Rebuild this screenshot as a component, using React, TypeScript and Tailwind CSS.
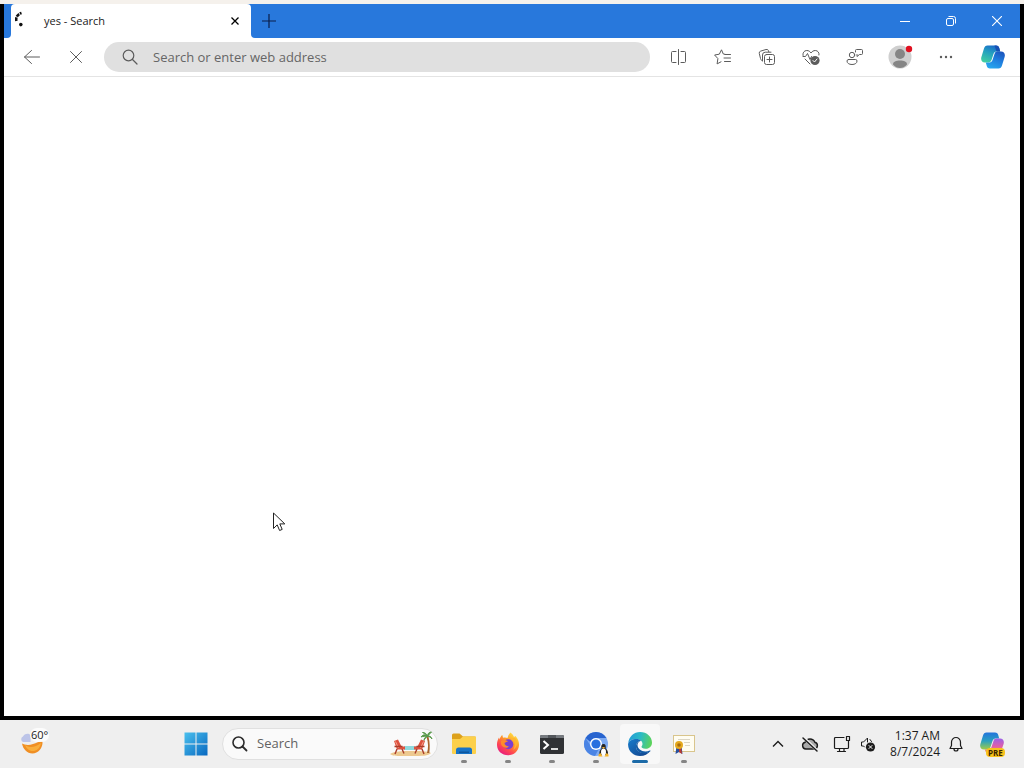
import { ReactNode, useState } from "react";

type ButtonProps = {
  label: string;
  className?: string;
  children: ReactNode;
};

function IconButton({ label, className = "w-11", children }: ButtonProps) {
  return (
    <button
      aria-label={label}
      className={`h-full shrink-0 flex items-center justify-center ${className}`}
    >
      {children}
    </button>
  );
}

function LineIcon({ children, size = 20 }: { children: ReactNode; size?: number }) {
  return (
    <svg
      width={size}
      height={size}
      viewBox={`0 0 ${size} ${size}`}
      fill="none"
      stroke="currentColor"
      strokeLinecap="round"
      strokeLinejoin="round"
    >
      {children}
    </svg>
  );
}

function TitleBar() {
  return (
    <div className="h-[34px] flex bg-[#2878dc]">
      <div className="w-[7px] shrink-0 bg-white">
        <div className="h-full rounded-br bg-[#2878dc]" />
      </div>
      <div className="bg-[#2878dc]">
        <div className="w-60 h-full flex items-center rounded-t bg-white pl-1 pr-2">
          <svg width="16" height="16" viewBox="0 0 16 16" className="shrink-0 mb-1">
            <path
              d="M1.4 10C.5 6.500 2.400 3.300 6.500 2"
              fill="none"
              stroke="#111"
              strokeWidth="2.600"
              strokeDasharray="3.600 .8"
            />
            <circle cx="5.800" cy="13.600" r="1.800" fill="#111" />
          </svg>
          <span className="ml-[13px] flex-1 text-[11px] text-[#1a1a1a]">
            yes - Search
          </span>
          <button aria-label="Close tab" className="p-1 text-black">
            <svg width="8" height="8" viewBox="0 0 8 8" stroke="currentColor" strokeWidth="1.300">
              <path d="M.5.5l7 7M7.500.5l-7 7" />
            </svg>
          </button>
        </div>
      </div>
      <div className="shrink-0 bg-white">
        <button
          aria-label="New tab"
          className="w-9 h-full flex items-center justify-center rounded-bl bg-[#2878dc] text-[#0b1f4a]"
        >
          <svg width="14" height="14" viewBox="0 0 14 14" stroke="currentColor" strokeWidth="1.200">
            <path d="M7 0v14M0 7h14" />
          </svg>
        </button>
      </div>
      <div className="ml-auto flex text-white">
        <IconButton label="Minimize" className="w-[46px]">
          <svg width="10" height="10" viewBox="0 0 10 10" stroke="currentColor">
            <path d="M0 5.500h10" />
          </svg>
        </IconButton>
        <IconButton label="Restore" className="w-[46px]">
          <svg width="10" height="10" viewBox="0 0 10 10" fill="none" stroke="currentColor">
            <rect x=".5" y="2.500" width="7" height="7" rx="1.500" />
            <path d="M2.500.5h5a2 2 0 0 1 2 2v5" />
          </svg>
        </IconButton>
        <IconButton label="Close" className="w-[46px]">
          <svg width="10" height="10" viewBox="0 0 10 10" stroke="currentColor" strokeWidth="1.100">
            <path d="M0 0l10 10M10 0L0 10" />
          </svg>
        </IconButton>
      </div>
    </div>
  );
}

function CopilotLogo() {
  return (
    <svg width="24" height="24" viewBox="0 0 24 24">
      <defs>
        <linearGradient id="copilotLeft" x1=".6" y1="0" x2=".2" y2="1">
          <stop offset="0" stopColor="#1a6cc9" />
          <stop offset=".4" stopColor="#239fc0" />
          <stop offset="1" stopColor="#42d0a0" />
        </linearGradient>
        <linearGradient id="copilotRight" x1=".8" y1="0" x2=".3" y2="1">
          <stop offset="0" stopColor="#1c55bd" />
          <stop offset=".5" stopColor="#1f7fdf" />
          <stop offset="1" stopColor="#26a6ee" />
        </linearGradient>
      </defs>
      <path
        d="M6.500.5H15c2 0 2.800 1 3.300 2.700L19.200 6.500h-3.700c-1.600 0-2.500.9-3 2.400l-2 6.200c-.6 1.700-1.500 2.400-3 2.400H4C1 17.500-.5 15 .4 12L3 3.500C3.600 1.500 4.600.5 6.500.5z"
        fill="url(#copilotLeft)"
      />
      <path d="M13.500.5H15c2 0 2.800 1 3.300 2.700l.9 3.300h-3.700z" fill="#1750b4" />
      <path
        d="M17.500 23.500H9c-2 0-2.800-1-3.300-2.700L4.800 17.500h3.700c1.600 0 2.500-.9 3-2.400l2-6.200c.6-1.700 1.500-2.400 3-2.400H20c3 0 4.500 2.500 3.600 5.500L21 20.500c-.6 2-1.600 3-3.500 3z"
        fill="url(#copilotRight)"
      />
    </svg>
  );
}

function Toolbar() {
  const [address, setAddress] = useState("");

  return (
    <div className="h-[39px] flex items-center border-b border-[#e4e4e4] bg-white pl-1.5 pr-[3px] text-[#5c5c5c]">
      <IconButton label="Back">
        <LineIcon size={16}>
          <path d="M15.500 8H.500M7.500 1.500L.5 8l7 6.500" />
        </LineIcon>
      </IconButton>
      <IconButton label="Stop">
        <LineIcon size={12}>
          <path d="M.5.5l11 11M11.500.5l-11 11" />
        </LineIcon>
      </IconButton>
      <div className="ml-1.5 mr-[7px] flex-1 min-w-0 h-[30px] flex items-center rounded-full bg-[#e0e0e0] pl-4">
        <LineIcon>
          <circle cx="8.500" cy="8.500" r="5.300" strokeWidth="1.200" />
          <path d="M12.500 12.500l4.500 4.500" strokeWidth="1.200" />
        </LineIcon>
        <input
          type="text"
          aria-label="Address bar"
          placeholder="Search or enter web address"
          value={address}
          onChange={(e) => setAddress(e.target.value)}
          className="ml-[13px] mt-px flex-1 min-w-0 bg-transparent outline-none text-[13px] text-[#333] placeholder:text-[#666]"
        />
      </div>
      <IconButton label="Split screen">
        <LineIcon>
          <path d="M9.500 2.500v15M7 4.500H3.500a1 1 0 0 0-1 1v9a1 1 0 0 0 1 1H7M12 4.500h3.500a1 1 0 0 1 1 1v9a1 1 0 0 1-1 1H12" />
        </LineIcon>
      </IconButton>
      <IconButton label="Favorites">
        <LineIcon>
          <path d="M12 7.300L10.300 7 8.500 2.800 6.300 7.200 1.600 8l3.300 3.600-.8 5.300L8 14.800M12 7.500h5.500M11 11h6.500M11.500 14.500h6" />
        </LineIcon>
      </IconButton>
      <IconButton label="Collections">
        <LineIcon>
          <rect x="7.500" y="7.500" width="10" height="10" rx="2" />
          <path d="M12.500 10v5M10 12.500h5M5 13.500c-1-.3-1.300-1-1.500-2L2.300 6.500a2 2 0 0 1 1.400-2.400L9 2.500a2 2 0 0 1 2.500 1.300l.3 1M5.500 14V8A2.800 2.800 0 0 1 8.300 5.200H14" />
        </LineIcon>
      </IconButton>
      <IconButton label="Browser essentials">
        <LineIcon>
          <path d="M2 8.500c-.6-2.500 1-5 3.800-5 1.900 0 3.200 1 4.200 2.500 1-1.500 2.500-2.500 4.300-2.500 2.700 0 4.200 2.500 3.700 4.500M2 9.500h2.500l2-3 2.500 6 1.500-3M4 12l5 5" />
          <circle cx="14" cy="13.500" r="4.600" fill="currentColor" stroke="none" />
          <path d="M12 13.500l1.500 1.500 2.500-3" stroke="#fff" />
        </LineIcon>
      </IconButton>
      <IconButton label="Feedback">
        <LineIcon>
          <circle cx="7" cy="8" r="2.700" />
          <path d="M3.500 12.500h7a1.500 1.500 0 0 1 1.500 1.500c0 2.200-2 3.500-5 3.500s-5-1.300-5-3.500a1.500 1.500 0 0 1 1.500-1.500zM10.500 5V3.500a1 1 0 0 1 1-1h5a1 1 0 0 1 1 1v3a1 1 0 0 1-1 1h-2L12 9.500v-2" />
        </LineIcon>
      </IconButton>
      <IconButton label="Profile" className="w-[46px]">
        <svg width="26" height="24" viewBox="0 0 26 24">
          <circle cx="13" cy="12" r="11.500" fill="#cfcfcf" />
          <circle cx="13" cy="9" r="5" fill="#858585" />
          <path d="M6 19.500c0-3 3-4 7-4s7 1 7 4c-2 2.500-4.500 3.500-7 3.500s-5-1-7-3.500z" fill="#858585" />
          <circle cx="22" cy="4" r="3.200" fill="#e01020" />
        </svg>
      </IconButton>
      <IconButton label="Settings and more" className="w-[46px]">
        <svg width="14" height="4" viewBox="0 0 14 4" fill="currentColor">
          <circle cx="2" cy="2" r="1.200" />
          <circle cx="7" cy="2" r="1.200" />
          <circle cx="12" cy="2" r="1.200" />
        </svg>
      </IconButton>
      <IconButton label="Copilot" className="w-12">
        <CopilotLogo />
      </IconButton>
    </div>
  );
}

function FolderIcon() {
  return (
    <svg width="24" height="24" viewBox="0 0 24 24">
      <path d="M0 3a1.500 1.500 0 0 1 1.500-1.500h6L11 4.500h11.500A1.500 1.500 0 0 1 24 6v4H0z" fill="#dda11b" />
      <path d="M0 7h8l3-2.500h13V21a1 1 0 0 1-1 1H1a1 1 0 0 1-1-1z" fill="#fcd04b" />
      <path d="M4 22v-4a2.500 2.500 0 0 1 2.500-2.500h11A2.500 2.500 0 0 1 20 18v4z" fill="#1873c6" />
      <path d="M7 19.500h10V21H7z" fill="#0d569e" />
    </svg>
  );
}

function FirefoxIcon() {
  return (
    <svg width="24" height="24" viewBox="0 0 24 24">
      <defs>
        <linearGradient id="fox" x1=".85" y1="0" x2=".2" y2="1">
          <stop offset="0" stopColor="#fff04a" />
          <stop offset=".4" stopColor="#ff9a28" />
          <stop offset=".7" stopColor="#ff4652" />
          <stop offset="1" stopColor="#e31587" />
        </linearGradient>
      </defs>
      <path
        d="M14.500.5c2 1.500 3 3 3.500 4.500l1.500-1c2.500 3 3.800 6 3.500 9.500C22.500 19 18 23.300 12 23.300S1.200 19 1 13c-.1-3 .8-5.500 2-7.500l.7 2C4 5.500 5 4 6.300 3l.7 2.700c2-.4 3.500-.2 4.500.3.500-2 1.500-4 3-5.500z"
        fill="url(#fox)"
      />
      <circle cx="12.300" cy="12.300" r="5" fill="#7a3fd0" />
      <path d="M5 9c2.500-1.500 5-1.200 7 .5-1.500 0-2 1-3.500 1.500 0 2 2 3.500 4.300 3.300C11 17 6.500 16 5 12z" fill="#ff8a2c" />
      <path d="M16 6c3 3 4 8 1 12 5-3 5-9 2-12z" fill="#ffb52f" />
    </svg>
  );
}

function TerminalIcon() {
  return (
    <svg width="24" height="20" viewBox="0 0 24 20">
      <rect y="1" width="24" height="19" rx="1.500" fill="#303235" />
      <path d="M0 4V2.500A1.500 1.500 0 0 1 1.500 1h21A1.500 1.500 0 0 1 24 2.500V4z" fill="#777b80" />
      <path d="M8 1h8v3H8z" fill="#53575c" />
      <path d="M3.500 7l4.500 4-4.500 4" fill="none" stroke="#fff" strokeWidth="2" />
      <path d="M11 15h7" stroke="#ddd" strokeWidth="2" />
    </svg>
  );
}

function ChromiumIcon() {
  return (
    <svg width="26" height="26" viewBox="0 0 26 26">
      <circle cx="13" cy="13" r="12" fill="#7daaf2" />
      <path d="M2.600 7A12 12 0 0 1 23.400 7H13a6 6 0 0 0-5.500 4z" fill="#2864cf" />
      <path d="M2.600 7A12 12 0 0 0 12 25l4-7.200a6 6 0 0 1-8.500-3z" fill="#4a84e4" />
      <circle cx="13" cy="13" r="6" fill="#fff" />
      <circle cx="13" cy="13" r="4.600" fill="#2870df" />
      <path d="M20.500 13c-2 0-2.500 2-2 4.500-1.800 2-2.700 4-1.700 6.500h7.600c1.500-2.500 0-5-1.700-6.500.3-2.500 0-4.500-2.200-4.500z" fill="#262626" />
      <ellipse cx="20.500" cy="21" rx="2.500" ry="3.500" fill="#fff" />
      <path d="M19 16h3l-1.500 2z" fill="#f5b12c" />
      <path d="M15.500 23.500l2-1.500 2 3.500h-4zM25.500 23.500l-2-1.500-2 3.500h4z" fill="#f3b229" />
    </svg>
  );
}

function EdgeIcon() {
  return (
    <svg width="24" height="24" viewBox="0 0 24 24">
      <defs>
        <linearGradient id="edgeTop" x1="0" y1=".3" x2="1" y2=".5">
          <stop offset="0" stopColor="#249bd8" />
          <stop offset=".5" stopColor="#2bbbc4" />
          <stop offset="1" stopColor="#5cd35a" />
        </linearGradient>
        <linearGradient id="edgeBottom" x1="0" y1="0" x2="1" y2="1">
          <stop offset="0" stopColor="#177ccc" />
          <stop offset="1" stopColor="#123f87" />
        </linearGradient>
      </defs>
      <path
        d="M.2 11C1 4.500 6 0 12 0c7 0 12 5 12 10.500 0 4-3 6.300-6.500 6.300-3 0-4-1.200-4-2 0-.7 1-1.200 1-2.800 0-2.600-2.500-5-6-5C4.500 7 1.500 8.500.2 11z"
        fill="url(#edgeTop)"
      />
      <path
        d="M.1 12C.5 9 4 7 8.500 7c2 0 3.500.7 4.500 1.700-3 0-5 3-5 5.800 0 4 3.500 6.500 8 6.500 2.500 0 4.500-.8 6.300-2C20 22 16.500 24 12 24 5.500 24-.3 18.800.1 12z"
        fill="url(#edgeBottom)"
      />
      <path
        d="M13 8.700c-3 0-5 3-5 5.800 0 4 3.500 6.800 8 6.800 2.500 0 4.500-.8 6.300-2.100.5-.4 0-1-.6-.7-1.200.6-2.700.9-4.200.9-4.500 0-8-3-8-6.500 0-1.800 1.200-3.400 3.500-4.200z"
        fill="#135ba5"
      />
    </svg>
  );
}

function CertificateIcon() {
  return (
    <svg width="24" height="22" viewBox="0 0 24 22">
      <rect x="1.500" y="2.500" width="21" height="16" fill="#fffdf2" stroke="#d9c58c" />
      <path d="M6 6.500h12M12 9.500h6M13 12.500h5" stroke="#dcd6c4" />
      <path d="M4.500 13L3.500 21l3.500-2 3.500 2-1-8z" fill="#274e9c" />
      <path d="M7 14v5l3 2-1-7z" fill="#c0392b" />
      <circle cx="7" cy="12" r="4" fill="#e5a91e" />
      <circle cx="7" cy="12" r="1.800" fill="#a86d10" />
    </svg>
  );
}

function BeachArt() {
  return (
    <svg width="44" height="26" viewBox="0 0 44 26">
      <path d="M1 23c5-3 12-3 20-3s17 0 21 2c-3 3-8 3-20 3S4 25.500 1 23z" fill="#edc98f" />
      <path d="M15 15h13v4H15z" fill="#8fd9dc" />
      <path d="M38 22c1.500-5 1.500-10-.5-16l2-.3c1.500 6 1.500 11 .8 16.300z" fill="#a8642d" />
      <path
        d="M38.500 5.500c-2.500-2.500-4.500-2-6.500.5 2.500-.8 4-.8 6.500-.5zM38.500 5.500c-1-3-2.500-4-5-4 2.500 1 3.500 2 5 4zM38.500 5.500c0-3 1.500-4.500 4-4.500-1.500 1.500-2.500 2.500-4 4.500zM38.500 5.500c2.500-1 3.500 0 4.500 2.500-1.500-2-2.500-2.500-4.500-2.500zM38.500 5.500c-2.200 0-3.500 1.700-3.500 4 .8-2 1.800-3 3.500-4z"
        fill="#58994b"
        stroke="#58994b"
      />
      <path d="M5 10l4-1.500 3.500 7H16v3H8z" fill="#dd5340" />
      <path d="M36 10l-4-1.500-3.500 7H25v3h8z" fill="#dd5340" />
      <path d="M6.500 10.500l3 6.500M34.500 10.500l-3 6.500" stroke="#f7a08d" />
      <path d="M8 18l-2 5M13 18l2 4.500M28 18l-2 4.500M33 18l2 5M5.500 15.500h8M27.500 15.500h8" stroke="#a93c2b" strokeWidth="1.400" />
    </svg>
  );
}

const apps = [
  { name: "File Explorer", icon: <FolderIcon />, active: false },
  { name: "Firefox", icon: <FirefoxIcon />, active: false },
  { name: "Terminal", icon: <TerminalIcon />, active: false },
  { name: "Chromium", icon: <ChromiumIcon />, active: false },
  { name: "Microsoft Edge", icon: <EdgeIcon />, active: true },
  { name: "Certificates", icon: <CertificateIcon />, active: false },
];

function Tray() {
  return (
    <div className="ml-auto h-full flex items-center pr-3 text-[#1c1c1c]">
      <IconButton label="Show hidden icons" className="w-8">
        <svg width="12" height="8" viewBox="0 0 12 8" fill="none" stroke="currentColor" strokeWidth="1.400">
          <path d="M1 6.500l5-5 5 5" />
        </svg>
      </IconButton>
      <IconButton label="OneDrive" className="w-8">
        <LineIcon size={18}>
          <path
            d="M4.800 14a3.400 3.400 0 0 1-.6-6.700C5 5.200 6.800 4 9 4s4 1.200 4.800 3.300a3.400 3.400 0 0 1-.6 6.700z"
            fill="#aaa"
            strokeWidth="1.400"
          />
          <path d="M2.500 2.500l13.500 13" stroke="#efefef" strokeWidth="3" />
          <path d="M2 3l14 13" strokeWidth="1.500" />
        </LineIcon>
      </IconButton>
      <IconButton label="Network" className="w-8">
        <LineIcon size={18}>
          <path d="M11 2.500H2.500a1 1 0 0 0-1 1v9a1 1 0 0 0 1 1h12a1 1 0 0 0 1-1V8M6.500 13.500v3M11 13.500v3M4.500 16.500h8M13.500 1.500h3v4h-3zM15.500 5.500V9" strokeWidth="1.200" />
        </LineIcon>
      </IconButton>
      <IconButton label="Volume" className="w-5">
        <LineIcon size={18}>
          <path d="M5.500 12L4.500 11H2.500V7h2L8.500 3v4M11 4.500l1.500 2" />
          <circle cx="11.500" cy="12" r="4.600" fill="currentColor" stroke="none" />
          <path d="M10 10.500l3 3M13 10.500l-3 3" stroke="#fff" />
        </LineIcon>
      </IconButton>
      <button className="ml-3 w-[50px] text-right text-[12px] leading-4 whitespace-nowrap">
        1:37 AM
        <br />
        8/7/2024
      </button>
      <IconButton label="Notifications" className="w-8">
        <LineIcon size={16}>
          <path d="M8 1.500a4.500 4.500 0 0 0-4.500 4.500v3.500L2 12.500h12L12.500 9.500V6A4.500 4.500 0 0 0 8 1.500zM6 13a2 2 0 0 0 4 0" strokeWidth="1.200" />
        </LineIcon>
      </IconButton>
      <IconButton label="Copilot preview" className="w-10">
        <span className="relative">
          <svg width="24" height="24" viewBox="0 0 24 24">
            <defs>
              <linearGradient id="preLeft" x1="0" y1="0" x2="0" y2="1">
                <stop offset="0" stopColor="#2374dc" />
                <stop offset=".5" stopColor="#2aa1c0" />
                <stop offset="1" stopColor="#a1cc45" />
              </linearGradient>
              <linearGradient id="preRight" x1="0" y1="0" x2="0" y2="1">
                <stop offset="0" stopColor="#9b61e8" />
                <stop offset=".5" stopColor="#df5fa9" />
                <stop offset="1" stopColor="#f59b51" />
              </linearGradient>
            </defs>
            <path d="M6.500.5H15c2 0 2.800 1 3.300 2.700L19.200 6.500h-3.700c-1.600 0-2.500.9-3 2.400l-2 6.200c-.6 1.700-1.500 2.400-3 2.400H4C1 17.500-.5 15 .4 12L3 3.500C3.600 1.500 4.600.5 6.500.5z" fill="url(#preLeft)" />
            <path d="M17.500 22H9c-2 0-2.800-1-3.300-2.200L4.800 17.500h3.700c1.600 0 2.500-.9 3-2.400l2-6.200c.6-1.700 1.500-2.400 3-2.400H20c3 0 4.500 2.500 3.600 5.500L21 19.500c-.6 1.700-1.600 2.500-3.500 2.500z" fill="url(#preRight)" />
          </svg>
          <span className="absolute left-1.5 -bottom-px rounded-sm bg-[#f8c21c] px-0.5 text-[8px] leading-[9px] font-bold text-[#3a2500]">
            PRE
          </span>
        </span>
      </IconButton>
    </div>
  );
}

function Taskbar() {
  const [query, setQuery] = useState("");

  return (
    <footer className="h-12 shrink-0 flex items-center bg-[#efefef]">
      <div className="w-[174px] h-full shrink-0 flex items-center pl-5">
        <button aria-label="Weather" className="relative h-8 w-8 mb-1">
          <svg width="26" height="28" viewBox="0 0 26 28">
            <path d="M2 15.500c2.500 1.500 7 2 11 .5s7-3 9.500-2.500C23 20 18 25.500 12.500 25.500S3 21 2 15.500z" fill="#f08f24" />
            <path d="M5 17c4 3 10 3 16-2-1 5.500-4.500 8-8.500 8-3.500 0-6-2.500-7.500-6z" fill="#f9ae3c" />
            <path d="M3 14a3 3 0 0 1 0-5.500C4 6 8 4.500 10.500 7v7z" fill="#bcc4e8" />
          </svg>
          <span className="absolute left-2.5 top-0.5 rounded-full bg-white/80 px-px text-[11px] leading-[14px] text-[#222]">
            60°
          </span>
        </button>
      </div>
      <IconButton label="Start">
        <svg width="24" height="24" viewBox="0 0 24 24">
          <defs>
            <linearGradient id="win" x1="0" y1="0" x2="1" y2="1">
              <stop offset="0" stopColor="#4ac0ee" />
              <stop offset="1" stopColor="#0868c0" />
            </linearGradient>
          </defs>
          <path d="M.5.5h11v11H.5zM12.500.5h11v11h-11zM.5 12.500h11v11H.5zM12.500 12.500h11v11h-11z" fill="url(#win)" />
        </svg>
      </IconButton>
      <label className="mx-1 w-[216px] h-8 flex items-center rounded-full border border-[#e0e0e0] bg-[#fafafa] pl-2 pr-1 text-[#2b2b2b]">
        <LineIcon size={18}>
          <circle cx="7.500" cy="7.500" r="5.500" strokeWidth="1.600" />
          <path d="M11.500 11.500l4 4" strokeWidth="1.800" />
        </LineIcon>
        <input
          type="text"
          aria-label="Search"
          placeholder="Search"
          value={query}
          onChange={(e) => setQuery(e.target.value)}
          className="ml-2 flex-1 min-w-0 bg-transparent outline-none text-[13px] placeholder:text-[#626262]"
        />
        <BeachArt />
      </label>
      {apps.map((app) => (
        <button
          key={app.name}
          aria-label={app.name}
          className="relative w-11 h-full flex items-center justify-center"
        >
          <span
            className={`w-10 h-10 flex items-center justify-center rounded ${
              app.active ? "bg-[#f8f8f8]" : ""
            }`}
          >
            {app.icon}
          </span>
          <span
            className={`absolute bottom-[5px] h-[3px] rounded-full ${
              app.active ? "w-4 bg-[#1c6ba8]" : "w-1.5 bg-[#858585]"
            }`}
          />
        </button>
      ))}
      <Tray />
    </footer>
  );
}

export default function App() {
  return (
    <div className="relative min-h-screen flex flex-col bg-[#f5f1ec] pt-1 font-['Open_Sans','Noto_Sans',sans-serif]">
      <main className="flex-1 flex flex-col border-x-4 border-b-4 border-black bg-white">
        <TitleBar />
        <Toolbar />
        <div className="flex-1 bg-white" />
      </main>
      <Taskbar />
      {/* mouse pointer */}
      <svg
        className="absolute left-[273px] top-[512px]"
        width="13"
        height="20"
        viewBox="0 0 13 20"
      >
        <path
          d="M.5 1v15.500l3.700-3.600 2.400 5.600 2.600-1.100-2.400-5.500h5z"
          fill="#fff"
          stroke="#222"
        />
      </svg>
    </div>
  );
}
